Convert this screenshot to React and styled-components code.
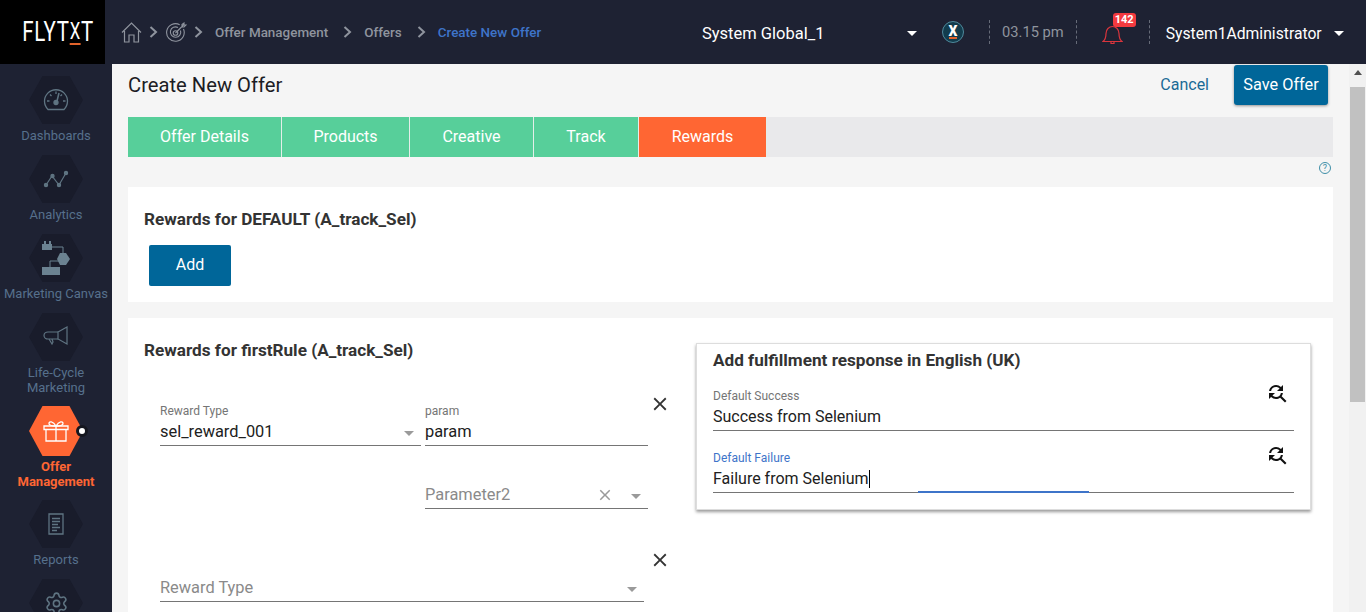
import styled, { createGlobalStyle } from "styled-components";
import { MdClose, MdFindReplace } from "react-icons/md";
import { Settings } from "lucide-react";

const GlobalStyle = createGlobalStyle`
  html, body {
    margin: 0;
    height: 100%;
    overflow: hidden;
    background: #f5f5f5;
    font-family: Roboto, "Liberation Sans", sans-serif;
  }
  * { box-sizing: border-box; }
`;

const navItems = [
  { label: ["Dashboards"], icon: <DashboardIcon /> },
  { label: ["Analytics"], icon: <AnalyticsIcon /> },
  { label: ["Marketing Canvas"], icon: <CanvasIcon /> },
  { label: ["Life-Cycle", "Marketing"], icon: <MegaphoneIcon /> },
  { label: ["Offer", "Management"], icon: <GiftIcon />, active: true },
  { label: ["Reports"], icon: <ReportIcon /> },
  { label: [], icon: <Settings size={25} strokeWidth={1.5} /> },
];

const tabs = [
  { name: "Offer Details", width: 154 },
  { name: "Products", width: 128 },
  { name: "Creative", width: 124 },
  { name: "Track", width: 105 },
  { name: "Rewards", width: 128, active: true },
];

function DashboardIcon() {
  return (
    <svg width="26" height="24" viewBox="0 0 26 24" fill="none" stroke="currentColor" strokeWidth="1.3">
      <path d="M5 21.5a11.5 11.5 0 1 1 16 0z" />
      <path d="M4 13h2.5M20 13h2.5M7 6.5l1.5 1.5M13 3.5V6M19 6.5 17.5 8" />
      <path d="M16 5l-2 8" strokeWidth="1.6" />
      <circle cx="13" cy="14.5" r="2" fill="currentColor" />
    </svg>
  );
}

function AnalyticsIcon() {
  return (
    <svg width="26" height="18" viewBox="0 0 26 18" fill="currentColor" stroke="currentColor" strokeWidth="1.2">
      <path d="M3 15 9 6l7 9 7-12" fill="none" />
      <circle cx="3" cy="15" r="1.6" />
      <circle cx="9.500" cy="6" r="1.6" />
      <circle cx="16" cy="15" r="1.6" />
      <circle cx="23" cy="3" r="1.6" />
    </svg>
  );
}

function CanvasIcon() {
  return (
    <svg width="30" height="36" viewBox="0 0 30 36" fill="#6b8291">
      <path d="M3 1h2v3H3zM8 1h2v3H8zM1 4h10v6H1z" />
      <path d="M11 7h11v6M9 27v-6h11" fill="none" stroke="#6b8291" />
      <path d="M19 13h6l4 6-4 6h-6l-3-6z" />
      <path d="M1 27h18v8H1z" />
    </svg>
  );
}

function MegaphoneIcon() {
  return (
    <svg width="26" height="22" viewBox="0 0 26 22" fill="none" stroke="currentColor" strokeWidth="1.2">
      <path d="M15 6 24 1v17l-9-5z" />
      <path d="M15 6H5a4 3.500 0 0 0 0 7h10" />
      <path d="M6 13l3 5 1-2-1-3" />
    </svg>
  );
}

function GiftIcon() {
  return (
    <svg width="26" height="22" viewBox="0 0 26 22" fill="none" stroke="#fff" strokeWidth="1.3">
      <path d="M1 6h24v3.500H1zM3 9.500V21h20V9.500M13 6v15" />
      <path d="M13 6C10 1 6 1 6 3.500 6 5.500 10 6 13 6c3 0 7-.5 7-2.500C20 1 16 1 13 6z" />
    </svg>
  );
}

function ReportIcon() {
  return (
    <svg width="18" height="22" viewBox="0 0 18 22" fill="none" stroke="currentColor" strokeWidth="1.300">
      <path d="M2 1h14v20H2z" />
      <path d="M5 5.500h8M5 8.500h8M5 11.500h6M5 14.500h8M5 17.500h5" />
    </svg>
  );
}

function HomeIcon() {
  return (
    <svg width="21" height="21" viewBox="0 0 21 21" fill="none" stroke="#8f949e" strokeWidth="1.200">
      <path d="M1 10.500 10.500 1 20 10.500M3.500 9v11h4.500v-7h5v7h4.500V9" />
    </svg>
  );
}

function TargetIcon() {
  return (
    <svg width="21" height="21" viewBox="0 0 21 21" fill="none" stroke="#8f949e" strokeWidth="1.100">
      <path d="M17.500 7a8.800 8.800 0 1 1-3.800-4.200" />
      <path d="M14.500 8.500a5.200 5.200 0 1 1-2.500-3" />
      <circle cx="9.500" cy="11" r="2.300" />
      <path d="M9.500 11 18 2.500M16 2.500l2-1.500v2h2l-2 2h-2z" />
    </svg>
  );
}

function Chevron() {
  return (
    <ChevronSvg width="9" height="12" viewBox="0 0 9 12" fill="none" stroke="#8f949e" strokeWidth="2">
      <path d="M1.500 1 7 6l-5.500 5" />
    </ChevronSvg>
  );
}

function BellIcon() {
  return (
    <svg width="21" height="20" viewBox="0 0 21 20" fill="none" stroke="#d9353d" strokeWidth="1.200">
      <path d="M1 16.500c2-1.500 3-4 3-8 0-4 3-7 6.500-7s6.500 3 6.500 7c0 4 1 6.500 3 8z" />
      <path d="M9 17v1.500h3V17" />
    </svg>
  );
}

export default function App() {
  return (
    <Page>
      <GlobalStyle />
      <Header>
        <Logo>
          <LogoText>
            FLYT<LogoX>X</LogoX>T
          </LogoText>
        </Logo>
        <Breadcrumb>
          <HomeIcon />
          <Chevron />
          <TargetWrap>
            <TargetIcon />
          </TargetWrap>
          <Chevron />
          <Crumb>Offer Management</Crumb>
          <Chevron />
          <Crumb>Offers</Crumb>
          <Chevron />
          <Crumb $current>Create New Offer</Crumb>
        </Breadcrumb>
        <Scope>
          System Global_1
          <HeaderCaret />
        </Scope>
        <BrandBadge>
          <BrandX>X</BrandX>
        </BrandBadge>
        <HeaderSep $first />
        <Clock>03.15 pm</Clock>
        <HeaderSep />
        <BellWrap>
          <BellIcon />
          <Badge>142</Badge>
        </BellWrap>
        <HeaderSep />
        <UserName>
          System1Administrator
          <HeaderCaret />
        </UserName>
      </Header>
      <Body>
        <Sidebar>
          {navItems.map((item, index) => (
            <NavItem key={index}>
              <Hex $active={item.active}>{item.icon}</Hex>
              {item.active && <ActiveDot />}
              <NavLabel $active={item.active}>
                {item.label.map((line) => (
                  <div key={line}>{line}</div>
                ))}
              </NavLabel>
            </NavItem>
          ))}
        </Sidebar>
        <Main>
          <TitleRow>
            <Title>Create New Offer</Title>
            <CancelLink>Cancel</CancelLink>
            <SaveButton>Save Offer</SaveButton>
          </TitleRow>
          <TabBar>
            {tabs.map((tab) => (
              <Tab key={tab.name} $width={tab.width} $active={tab.active}>
                {tab.name}
              </Tab>
            ))}
          </TabBar>
          <HelpRow>
            <HelpIcon>?</HelpIcon>
          </HelpRow>
          <DefaultCard>
            <CardHeading>Rewards for DEFAULT (A_track_Sel)</CardHeading>
            <AddButton>Add</AddButton>
          </DefaultCard>
          <RuleCard>
            <RuleColumn>
              <CardHeading>Rewards for firstRule (A_track_Sel)</CardHeading>
              <RewardRow $first>
                <FieldGrid>
                  <Field>
                    <FieldLabel>Reward Type</FieldLabel>
                    <FieldValue>
                      sel_reward_001
                      <Caret />
                    </FieldValue>
                  </Field>
                  <Field>
                    <FieldLabel>param</FieldLabel>
                    <FieldValue>param</FieldValue>
                  </Field>
                  <span />
                  <Field>
                    <FieldValue $placeholder>
                      Parameter2
                      <ClearIcon>
                        <MdClose size={18} />
                      </ClearIcon>
                      <Caret $tight />
                    </FieldValue>
                  </Field>
                </FieldGrid>
                <RemoveButton>
                  <MdClose size={22} />
                </RemoveButton>
              </RewardRow>
              <RewardRow>
                <WideField>
                  <Field>
                    <FieldValue $placeholder>
                      Reward Type
                      <Caret />
                    </FieldValue>
                  </Field>
                </WideField>
                <RemoveButton $wide>
                  <MdClose size={22} />
                </RemoveButton>
              </RewardRow>
            </RuleColumn>
            <ResponsePanel>
              <PanelHeading>Add fulfillment response in English (UK)</PanelHeading>
              <ResponseField>
                <FieldLabel>Default Success</FieldLabel>
                <FieldValue>Success from Selenium</FieldValue>
                <FindButton>
                  <MdFindReplace size={24} />
                </FindButton>
              </ResponseField>
              <ResponseField>
                <FieldLabel $focused>Default Failure</FieldLabel>
                <FieldValue>
                  Failure from Selenium
                  <TextCursor />
                </FieldValue>
                <FindButton>
                  <MdFindReplace size={24} />
                </FindButton>
                <FocusBar />
              </ResponseField>
            </ResponsePanel>
          </RuleCard>
        </Main>
        <Scrollbar>
          <ScrollArrow />
          <ScrollThumb />
        </Scrollbar>
      </Body>
    </Page>
  );
}

const Page = styled.div`
  height: 612px;
  display: flex;
  flex-direction: column;
  overflow: hidden;
`;

const Header = styled.header`
  flex: 0 0 64px;
  display: flex;
  align-items: center;
  background: #1e2233;
`;

const Logo = styled.div`
  flex: 0 0 105px;
  min-width: 0;
  height: 64px;
  display: flex;
  align-items: center;
  justify-content: center;
  background: #000;
  color: #fff;
`;

const LogoText = styled.div`
  display: flex;
  flex: none;
  align-items: center;
  padding-left: 15px;
  font-size: 28px;
  font-weight: 400;
  line-height: 28px;
  letter-spacing: 1px;
  transform: scaleX(0.73);
`;

const LogoX = styled.span`
  font-size: 23px;
  line-height: 20px;
  padding-bottom: 1px;
  margin-top: 2px;
  border-bottom: 2px solid #e2632b;
`;

const Breadcrumb = styled.nav`
  flex: 0 0 597px;
  display: flex;
  align-items: center;
  padding-left: 16px;
`;

const ChevronSvg = styled.svg`
  margin-left: 7px;
`;

const TargetWrap = styled.span`
  display: flex;
  margin-left: 8px;
`;

const Crumb = styled.span`
  margin: 0 8px 0 12px;
  font-size: 13.45px;
  font-weight: 500;
  color: ${(props) => (props.$current ? "#3e74c9" : "#8f949e")};
`;

const HeaderCaret = styled.i`
  width: 0;
  height: 0;
  border-left: 5px solid transparent;
  border-right: 5px solid transparent;
  border-top: 5px solid #fff;
`;

const Scope = styled.div`
  flex: 0 0 221px;
  display: flex;
  align-items: center;
  justify-content: space-between;
  padding: 2px 6px 0 0;
  color: #fff;
  font-size: 16.5px;
`;

const BrandBadge = styled.div`
  width: 22px;
  height: 22px;
  margin-left: 19px;
  display: flex;
  align-items: center;
  justify-content: center;
  border-radius: 50%;
  border: 1px solid #4f8a9c;
  background: #123c4d;
`;

const BrandX = styled.span`
  color: #fff;
  font-size: 14px;
  font-weight: 900;
  line-height: 12px;
  border-bottom: 2px solid #e2632b;
`;

const HeaderSep = styled.div`
  width: 0;
  height: 24px;
  margin-left: ${(props) => (props.$first ? "25px" : "0")};
  border-left: 1px dashed #666b78;
`;

const Clock = styled.div`
  margin: 0 12px;
  color: #8f949e;
  font-size: 14.7px;
`;

const BellWrap = styled.div`
  position: relative;
  display: flex;
  margin: 5px 26px 0 25px;
`;

const Badge = styled.span`
  position: absolute;
  top: -12px;
  left: 11px;
  width: 23px;
  height: 14px;
  border-radius: 3px;
  background: #f33a3f;
  color: #fff;
  font-size: 11px;
  font-weight: 700;
  line-height: 14px;
  text-align: center;
`;

const UserName = styled.div`
  display: flex;
  align-items: center;
  gap: 12px;
  margin-left: 16px;
  padding-top: 2px;
  color: #fff;
  font-size: 15.7px;
`;

const Body = styled.div`
  flex: 1;
  min-height: 0;
  display: flex;
`;

const Sidebar = styled.aside`
  flex: 0 0 112px;
  padding-top: 12px;
  display: flex;
  flex-direction: column;
  align-items: center;
  background: #1e2233;
  overflow: hidden;
`;

const NavItem = styled.div`
  position: relative;
  flex: none;
  width: 112px;
  margin-bottom: 12px;
  display: flex;
  flex-direction: column;
  align-items: center;
`;

const Hex = styled.div`
  width: 54px;
  height: ${(props) => (props.$active ? "50px" : "48px")};
  margin-top: ${(props) => (props.$active ? "-1px" : "0")};
  display: flex;
  align-items: center;
  justify-content: center;
  color: #5f7482;
  background: ${(props) => (props.$active ? "#ff6633" : "#191c2b")};
  clip-path: polygon(25% 0, 75% 0, 100% 50%, 75% 100%, 25% 100%, 0 50%);
`;

const ActiveDot = styled.span`
  position: absolute;
  left: 76px;
  top: 18px;
  width: 12px;
  height: 12px;
  border-radius: 50%;
  background: #fff;
  border: 3px solid #14161f;
`;

const NavLabel = styled.div`
  margin-top: ${(props) => (props.$active ? "3px" : "4px")};
  margin-bottom: ${(props) => (props.$active ? "-1px" : "0")};
  color: ${(props) => (props.$active ? "#ff6633" : "#56708c")};
  font-size: 13px;
  font-weight: ${(props) => (props.$active ? 700 : 400)};
  line-height: 15px;
  text-align: center;
  white-space: nowrap;
`;

const Main = styled.main`
  flex: 1;
  min-width: 0;
  padding: 1px 16px 0;
  overflow: hidden;
  background: #f5f5f5;
`;

const TitleRow = styled.div`
  height: 40px;
  margin-bottom: 12px;
  padding-right: 5px;
  display: flex;
  align-items: center;
`;

const Title = styled.h1`
  flex: 1;
  margin: 0;
  color: #1c1c24;
  font-size: 20.2px;
  font-weight: 400;
`;

const CancelLink = styled.a`
  margin-right: 25px;
  padding-bottom: 2px;
  color: #1a6a96;
  font-size: 16px;
`;

const SaveButton = styled.button`
  width: 94px;
  height: 40px;
  padding: 0 0 2px;
  border: none;
  border-radius: 3px;
  background: #006699;
  box-shadow: 0 1px 3px rgba(0, 0, 0, 0.4);
  color: #fff;
  font: 400 16.3px Roboto, sans-serif;
`;

const TabBar = styled.div`
  height: 40px;
  display: flex;
  background: #e9e9eb;
`;

const Tab = styled.div`
  flex: 0 0 ${(props) => props.$width}px;
  padding-bottom: 2px;
  display: flex;
  align-items: center;
  justify-content: center;
  border-right: 1px solid #e4eee9;
  background: ${(props) => (props.$active ? "#ff6633" : "#57cf9a")};
  color: #fff;
  font-size: 16px;
`;

const HelpRow = styled.div`
  height: 30px;
  padding: 5px 2px 0 0;
  display: flex;
  justify-content: flex-end;
`;

const HelpIcon = styled.span`
  width: 12px;
  height: 12px;
  border: 1px solid #3f8fa8;
  border-radius: 50%;
  color: #3f8fa8;
  font-size: 9px;
  line-height: 10px;
  text-align: center;
`;

const DefaultCard = styled.section`
  height: 115px;
  margin-bottom: 16px;
  padding: 22px 16px 0;
  background: #fff;
`;

const CardHeading = styled.h2`
  margin: 0;
  color: #333;
  font-size: 17.15px;
  font-weight: 700;
  line-height: 20px;
`;

const AddButton = styled.button`
  display: block;
  width: 82px;
  height: 41px;
  margin: 16px 0 0 5px;
  padding: 0 0 2px;
  border: none;
  border-radius: 2px;
  background: #006699;
  color: #fff;
  font: 400 16px Roboto, sans-serif;
`;

const RuleCard = styled.section`
  height: 300px;
  padding: 25px 22px 0 16px;
  display: flex;
  align-items: flex-start;
  background: #fff;
`;

const RuleColumn = styled.div`
  flex: 0 0 536px;
  margin: -3px 16px 0 0;
`;

const RewardRow = styled.div`
  margin-top: ${(props) => (props.$first ? "33px" : "40px")};
  padding-left: 16px;
  display: flex;
  align-items: flex-start;
  font-size: 16.4px;
`;

const FieldGrid = styled.div`
  flex: 0 0 488px;
  margin-top: 12px;
  display: grid;
  grid-template-columns: 261px 223px;
  column-gap: 4px;
  row-gap: 39px;
  align-items: end;
`;

const WideField = styled.div`
  flex: 0 0 484px;
  margin-top: 29px;
`;

const Field = styled.div`
  padding-bottom: 3px;
  border-bottom: 1px solid #757575;
`;

const FieldLabel = styled.div`
  margin: -1px 0 4px;
  color: ${(props) => (props.$focused ? "#3e74c9" : "#757575")};
  font-size: 12px;
  line-height: 14px;
`;

const FieldValue = styled.div`
  display: flex;
  align-items: center;
  height: 20px;
  color: ${(props) => (props.$placeholder ? "#8a8a8a" : "#212121")};
  line-height: 20px;
`;

const Caret = styled.i`
  width: 0;
  height: 0;
  margin-left: ${(props) => (props.$tight ? "17px" : "auto")};
  margin-right: 7px;
  margin-top: 2px;
  border-left: 5px solid transparent;
  border-right: 5px solid transparent;
  border-top: 5px solid #9a9a9a;
`;

const ClearIcon = styled.span`
  display: flex;
  margin-left: auto;
  color: #9a9a9a;
`;

const RemoveButton = styled.span`
  display: flex;
  margin-left: ${(props) => (props.$wide ? "5px" : "1px")};
  color: #333;
`;

const ResponsePanel = styled.div`
  flex: 1;
  min-width: 0;
  padding: 6px 16px 16px;
  border: 1px solid #ddd;
  background: #fff;
  box-shadow: 0 2px 3px rgba(0, 0, 0, 0.4);
  font-size: 16px;
`;

const PanelHeading = styled.h3`
  margin: 0 0 20px;
  color: #333;
  font-size: 17.15px;
  font-weight: 700;
  line-height: 20px;
`;

const ResponseField = styled(Field)`
  position: relative;
  & + & {
    margin-top: 21px;
  }
`;

const FindButton = styled.span`
  position: absolute;
  top: -8px;
  right: 5px;
  display: flex;
  color: #111;
`;

const TextCursor = styled.i`
  width: 1px;
  height: 18px;
  background: #000;
`;

const FocusBar = styled.i`
  position: absolute;
  left: 205px;
  bottom: -1px;
  width: 171px;
  height: 2px;
  background: #3e74c9;
`;

const Scrollbar = styled.div`
  flex: 0 0 17px;
  display: flex;
  flex-direction: column;
  align-items: center;
  background: #f1f1f1;
`;

const ScrollArrow = styled.i`
  width: 0;
  height: 0;
  margin-top: 6px;
  border-left: 4px solid transparent;
  border-right: 4px solid transparent;
  border-bottom: 5px solid #505050;
`;

const ScrollThumb = styled.div`
  width: 15px;
  height: 315px;
  margin-top: 12px;
  background: #c1c1c1;
`;
